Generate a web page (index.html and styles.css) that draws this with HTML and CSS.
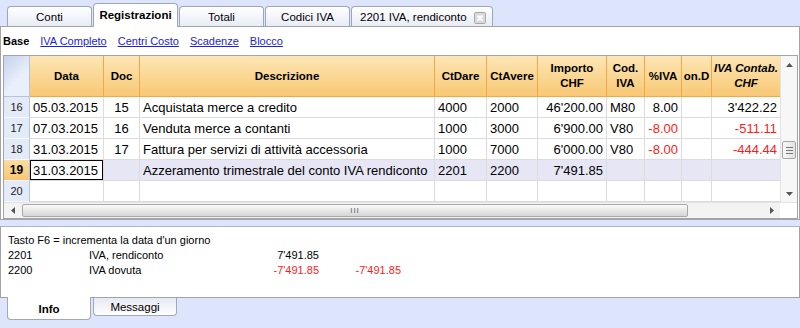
FILE: index.html
```html
<!DOCTYPE html>
<html>
<head>
  <title>Registrazioni</title>
  <link rel="stylesheet" href="styles.css">
</head>
<body>
  <div class="tabs">
    <div class="tab">Conti</div>
    <div class="tab active">Registrazioni</div>
    <div class="tab">Totali</div>
    <div class="tab">Codici IVA</div>
    <div class="tab wide">
      <span>2201 IVA, rendiconto</span>
      <svg class="close" width="12" height="12" viewBox="0 0 12 12">
        <rect x="0.5" y="0.5" width="11" height="11" rx="1" fill="#d9d9d9" stroke="#a8a8a8"/>
        <path d="M3.5 3.5 L8.5 8.5 M8.5 3.5 L3.5 8.5" stroke="#fff" stroke-width="2"/>
      </svg>
    </div>
  </div>

  <div class="main">
    <div class="subtabs">
      <b>Base</b>
      <a href="#">IVA Completo</a>
      <a href="#">Centri Costo</a>
      <a href="#">Scadenze</a>
      <a href="#">Blocco</a>
    </div>

    <div class="grid">
      <div class="grid-body">
        <table>
          <colgroup>
            <col style="width:26px"><col style="width:74px"><col style="width:36px"><col style="width:295px">
            <col style="width:52px"><col style="width:51px"><col style="width:69px"><col style="width:38px">
            <col style="width:37px"><col style="width:30px"><col style="width:68px">
          </colgroup>
          <thead>
            <tr>
              <th class="corner"></th>
              <th>Data</th>
              <th>Doc</th>
              <th>Descrizione</th>
              <th>CtDare</th>
              <th>CtAvere</th>
              <th>Importo<br>CHF</th>
              <th>Cod.<br>IVA</th>
              <th>%IVA</th>
              <th>on.D</th>
              <th class="ital">IVA Contab.<br>CHF</th>
            </tr>
          </thead>
          <tbody>
            <tr>
              <td class="num">16</td>
              <td>05.03.2015</td>
              <td class="c">15</td>
              <td>Acquistata merce a credito</td>
              <td>4000</td>
              <td>2000</td>
              <td class="r">46'200.00</td>
              <td>M80</td>
              <td class="r">8.00</td>
              <td></td>
              <td class="r">3'422.22</td>
            </tr>
            <tr>
              <td class="num">17</td>
              <td>07.03.2015</td>
              <td class="c">16</td>
              <td>Venduta merce a contanti</td>
              <td>1000</td>
              <td>3000</td>
              <td class="r">6'900.00</td>
              <td>V80</td>
              <td class="r neg">-8.00</td>
              <td></td>
              <td class="r neg">-511.11</td>
            </tr>
            <tr>
              <td class="num">18</td>
              <td>31.03.2015</td>
              <td class="c">17</td>
              <td>Fattura per servizi di attività accessoria</td>
              <td>1000</td>
              <td>7000</td>
              <td class="r">6'000.00</td>
              <td>V80</td>
              <td class="r neg">-8.00</td>
              <td></td>
              <td class="r neg">-444.44</td>
            </tr>
            <tr class="current">
              <td class="num">19</td>
              <td class="selected">31.03.2015</td>
              <td></td>
              <td>Azzeramento trimestrale del conto IVA rendiconto</td>
              <td>2201</td>
              <td>2200</td>
              <td class="r">7'491.85</td>
              <td></td>
              <td></td>
              <td></td>
              <td></td>
            </tr>
            <tr>
              <td class="num">20</td>
              <td></td><td></td><td></td><td></td><td></td>
              <td></td><td></td><td></td><td></td><td></td>
            </tr>
          </tbody>
        </table>

        <div class="vscroll">
          <div class="arrow">
            <svg width="7" height="4" viewBox="0 0 7 4"><path d="M0 4 L3.5 0 L7 4 Z" fill="#555"/></svg>
          </div>
          <div class="vtrack">
            <div class="vthumb"><span></span><span></span><span></span></div>
          </div>
          <div class="arrow">
            <svg width="7" height="4" viewBox="0 0 7 4"><path d="M0 0 L3.5 4 L7 0 Z" fill="#555"/></svg>
          </div>
        </div>
      </div>

      <div class="hscroll">
        <div class="harrow">
          <svg width="4" height="7" viewBox="0 0 4 7"><path d="M4 0 L0 3.5 L4 7 Z" fill="#555"/></svg>
        </div>
        <div class="htrack">
          <div class="hthumb">III</div>
        </div>
        <div class="harrow">
          <svg width="4" height="7" viewBox="0 0 4 7"><path d="M0 0 L4 3.5 L0 7 Z" fill="#555"/></svg>
        </div>
        <div class="scorner"></div>
      </div>
    </div>
  </div>

  <div class="info">
    <div class="info-title">Tasto F6 = incrementa la data d'un giorno</div>
    <div class="info-row">
      <span>2201</span>
      <span>IVA, rendiconto</span>
      <span class="r">7'491.85</span>
      <span></span>
    </div>
    <div class="info-row">
      <span>2200</span>
      <span>IVA dovuta</span>
      <span class="r neg">-7'491.85</span>
      <span class="r neg">-7'491.85</span>
    </div>
  </div>

  <div class="btabs">
    <div class="btab active">Info</div>
    <div class="btab">Messaggi</div>
  </div>
</body>
</html>
```

FILE: styles.css
```css
body {
  margin: 0;
  width: 800px;
  height: 328px;
  overflow: hidden;
  background-color: #dce5fb;
  font-family: "Liberation Sans", Arial, sans-serif;
  color: #000;
}

/* top tabs */
.tabs {
  display: flex;
  align-items: flex-end;
  gap: 1px;
  height: 26px;
  padding-left: 7px;
}
.tab {
  box-sizing: border-box;
  width: 85px;
  height: 20px;
  display: flex;
  align-items: center;
  justify-content: center;
  border: 1px solid #9ea6b8;
  border-bottom: none;
  border-radius: 4px 4px 0 0;
  background: linear-gradient(#ffffff, #e8ecf6);
  font-size: 11.5px;
}
.tab.active {
  height: 24px;
  margin-bottom: -1px;
  padding-bottom: 2px;
  background: #fff;
  font-weight: bold;
  position: relative;
}
.tab.wide {
  width: 142px;
  justify-content: space-between;
  padding: 0 6px 0 8px;
}
.close {
  display: block;
  margin-top: 2px;
}

/* main panel */
.main {
  box-sizing: border-box;
  height: 194px;
  background: #fff;
  border: 1px solid #a3a3a3;
}
.subtabs {
  display: flex;
  align-items: center;
  gap: 11px;
  height: 28px;
  padding-left: 2px;
  font-size: 11px;
}
.subtabs a {
  color: #1d22d8;
}

.grid {
  box-sizing: border-box;
  width: 795px;
  margin-left: 2px;
  border: 1px solid #a0a4ae;
}
.grid-body {
  display: flex;
}
table {
  width: 776px;
  table-layout: fixed;
  border-collapse: separate;
  border-spacing: 0;
}
th {
  height: 40px;
  padding: 0;
  border-right: 1px solid #f2a848;
  border-bottom: 1px solid #f2a848;
  background: linear-gradient(#fde6b5, #fad48e 60%, #f8c875);
  font-size: 11.5px;
  line-height: 15px;
  text-align: center;
  white-space: nowrap;
}
th.corner {
  border-right: 1px solid #b5c2d8;
  border-bottom: 1px solid #b5c2d8;
  background: linear-gradient(135deg, #c3d2ee, #eaf0fb 60%);
}
th.ital {
  font-style: italic;
  border-right: none;
}
tbody tr {
  height: 21px;
}
td {
  padding: 0 3px;
  border-right: 1px solid #dcdcdc;
  border-bottom: 1px solid #dcdcdc;
  font-size: 13px;
  white-space: nowrap;
  overflow: hidden;
}
td:last-child {
  border-right: none;
}
td.num {
  padding: 0;
  text-align: center;
  font-size: 11px;
  color: #222;
  background: #e3ebf8;
  border-right: 1px solid #b5c2d8;
  border-bottom: 1px solid #f4f7fc;
}
td.c {
  text-align: center;
}
.r {
  text-align: right;
}
.neg {
  color: #ff1a1a;
}
tr.current td {
  background: #e6e6f5;
}
tr.current td.num {
  background: linear-gradient(#fcdca0, #f8c774);
  font-weight: bold;
  font-size: 12px;
  color: #000;
}
tr.current td.selected {
  background: #fff;
  box-shadow: inset 0 0 0 1px #000;
}

/* scrollbars */
.vscroll {
  width: 17px;
  display: flex;
  flex-direction: column;
  background: #f7f7f7;
  border-left: 1px solid #e2e2e2;
}
.arrow {
  height: 17px;
  display: flex;
  align-items: center;
  justify-content: center;
}
.vtrack {
  flex: 1;
  padding-top: 68px;
}
.vthumb {
  box-sizing: border-box;
  width: 14px;
  height: 18px;
  margin-left: 1px;
  display: flex;
  flex-direction: column;
  align-items: center;
  justify-content: center;
  gap: 2px;
  border: 1px solid #a6a6a6;
  border-radius: 2px;
  background: linear-gradient(90deg, #fafafa, #e1e1e1);
}
.vthumb span {
  width: 7px;
  height: 1px;
  background: #777;
}
.hscroll {
  display: flex;
  height: 15px;
  background: #f3f3f3;
  border-top: 1px solid #e2e2e2;
}
.harrow {
  width: 17px;
  display: flex;
  align-items: center;
  justify-content: center;
}
.htrack {
  flex: 1;
  padding: 1px 0 1px 1px;
}
.hthumb {
  box-sizing: border-box;
  width: 666px;
  height: 13px;
  border: 1px solid #a8a8a8;
  border-radius: 2px;
  background: linear-gradient(#fbfbfb, #e6e6e6 55%, #d6d6d6);
  font-size: 8px;
  line-height: 11px;
  text-align: center;
  color: #666;
  letter-spacing: 1px;
}
.scorner {
  width: 17px;
  background: #fff;
}

/* info panel */
.info {
  box-sizing: border-box;
  height: 72px;
  margin-top: 6px;
  padding: 6px 7px 0;
  background: #fff;
  border: 1px solid #a3a3a3;
  border-top-color: #aeb4cb;
  font-size: 11px;
  line-height: 15px;
}
.info-row {
  display: grid;
  grid-template-columns: 81px 150px 80px 82px;
}

.btabs {
  display: flex;
  gap: 2px;
  padding-left: 7px;
}
.btab {
  box-sizing: border-box;
  width: 84px;
  height: 18px;
  display: flex;
  align-items: center;
  justify-content: center;
  border: 1px solid #a3a8b8;
  border-top: none;
  border-radius: 0 0 4px 4px;
  background: linear-gradient(#e5e9f2, #ffffff);
  font-size: 11.5px;
}
.btab.active {
  height: 23px;
  margin-top: -1px;
  padding-top: 2px;
  background: #fff;
  font-weight: bold;
}
```
